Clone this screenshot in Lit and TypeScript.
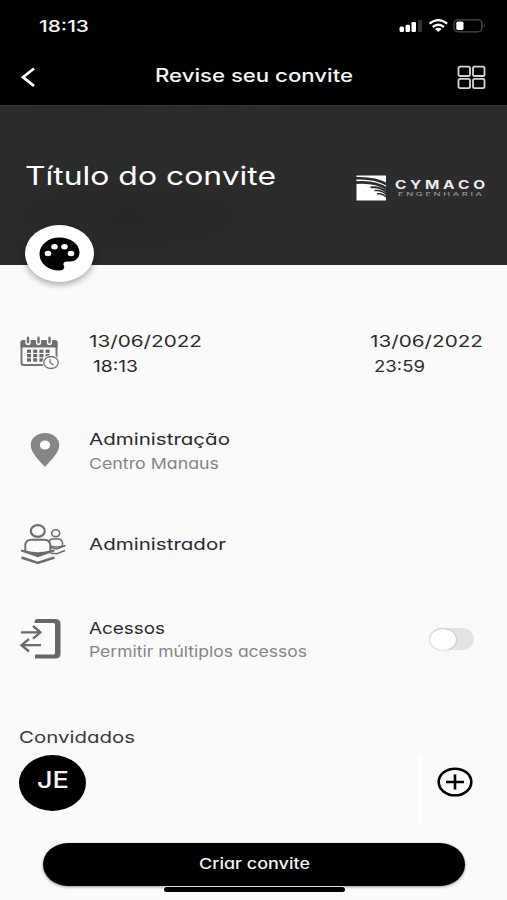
import { LitElement, html, svg, css } from "lit";
import { customElement, property } from "lit/decorators.js";

@customElement("wide-text")
class WideText extends LitElement {
  @property() text = "";
  @property({ type: Number }) width = 100;
  @property({ type: Number }) size = 16.5;
  @property({ type: Number }) line = 24;
  @property({ type: Number }) baseline = 18;
  static styles = css`
    :host { display: block; flex: none; }
    svg { display: block; overflow: visible; }
    text { fill: currentColor; font-family: Inter, "Liberation Sans", sans-serif; font-feature-settings: "cv11"; }
  `;
  render() {
    return html`<svg width=${this.width} height=${this.line}>
      ${svg`<text x="0" y=${this.baseline} font-size=${this.size} textLength=${this.width} lengthAdjust="spacingAndGlyphs">${this.text}</text>`}
    </svg>`;
  }
}

@customElement("app-root")
class AppRoot extends LitElement {
  static styles = css`
    :host { display: block; height: 900px; background: #fafafa; color: #2b2b2b; overflow: hidden; }
    * { box-sizing: border-box; }
    svg { display: block; flex: none; overflow: visible; }
    .status { height: 50px; background: #000; color: #f4f4f4; display: flex; justify-content: space-between; padding: 14px 20px 0 39px; font-weight: 550; }
    .nav { height: 55px; background: #000; color: #f6f6f6; display: flex; justify-content: space-between; padding: 13px 21px 0 20px; font-weight: 550; }
    .nav .title { margin-left: 88px; }
    .nav .grid { margin-left: 77px; }
    .hero { position: relative; height: 160px; color: #fff; display: flex; justify-content: space-between; padding: 54px 22px 0 25px;
      background: radial-gradient(ellipse at 18% 0, rgba(38,41,43,.6), transparent 40%), radial-gradient(ellipse at 25% 70%, rgba(37,37,37,.7), transparent 40%), #2c2c2c;
      border-top: 1px solid #353535; }
    .hero .title { font-weight: 400; }
    .logo { display: flex; gap: 8px; padding-top: 15px; }
    .brand { display: flex; flex-direction: column; padding-top: 3px; }
    .brand .name { font-weight: 650; color: #ececec; }
    .brand .sub { color: #a4a4a4; margin-left: 3px; }
    .palette { position: absolute; left: 25px; top: 119px; width: 69px; height: 57px; border-radius: 50%; background: #fff; display: flex; align-items: center; justify-content: center; box-shadow: 0 3px 6px rgba(0,0,0,.32); }
    .row { display: flex; align-items: center; padding: 0 24px 0 19px; }
    .row .icon { width: 70px; flex: none; }
    .grow { flex: 1; }
    .dates { margin-top: 64px; height: 50px; }
    .place { margin-top: 48px; height: 46px; }
    .admin { margin-top: 50px; height: 42px; }
    .access { margin-top: 51px; height: 46px; padding-right: 33px; }
    .time { padding-left: 4px; }
    .muted { color: #858585; }
    .switch { width: 44px; height: 22px; border-radius: 12px / 11px; background: #e3e3e3; display: flex; align-items: center; }
    .knob { width: 26px; height: 21px; border-radius: 50%; background: #fff; box-shadow: 0 0 2px rgba(0,0,0,.35); }
    .heading { padding: 63px 0 0 19px; color: #3a3a3a; }
    .guests { display: flex; padding: 4px 34px 0 19px; height: 75px; }
    .avatar { width: 67px; height: 56px; margin-top: 1px; border-radius: 50%; background: #000; color: #f5f5f5; display: flex; justify-content: center; padding-top: 10px; font-weight: 450; }
    .divider { width: 4px; height: 70px; background: #fff; margin-right: 15px; }
    .add { margin-top: 13px; }
    .cta { margin: 18px 42px 0 43px; height: 43px; border-radius: 25px / 21.5px; background: #000; color: #f4f4f4; display: flex; justify-content: center; padding: 2px 0 0 0; box-shadow: 0 1px 3px rgba(0,0,0,.4); font-weight: 550; }
    .home { width: 181px; height: 5px; margin: 1px 0 0 164px; border-radius: 3px; background: #000; box-shadow: 0 0 0 1px rgba(255,255,255,.55); position: relative; }
  `;

  private calendar() {
    const dots = [0, 1, 2, 3].flatMap((c) => [0, 1, 2].map((r) => svg`<rect x=${8 + c * 6.2} y=${12.6 + r * 4.4} width="4" height="3.3" fill="#686868"/>`));
    return html`<svg width="42" height="34" viewBox="0 0 42 34">
      <path d="M4.500 4H35Q37.500 4 37.500 6.500V26Q37.500 28 35 28H4.500Q2.500 28 2.500 26V6.500Q2.500 4 4.500 4Z" fill="#fafafa" stroke="#757575" stroke-width="2"/>
      <path d="M1.500 5Q1.500 3 4 3H36Q38.500 3 38.500 5V10.500H1.500Z" fill="#707070"/>
      <path d="M9 1V5.500M19.500 1V5.500M30.500 1V5.500" stroke="#fafafa" stroke-width="5.200" stroke-linecap="round"/>
      <path d="M9 .8V5.300M19.500 .8V5.300M30.500 .8V5.300" stroke="#707070" stroke-width="2.400" stroke-linecap="round"/>
      ${dots}
      <ellipse cx="32" cy="25.500" rx="8.800" ry="7.400" fill="#fafafa"/>
      <ellipse cx="32" cy="25.500" rx="7.200" ry="6" fill="#fafafa" stroke="#777" stroke-width="1.300"/>
      <path d="M31 22V25.500L34.500 28" fill="none" stroke="#777" stroke-width="1.300"/>
    </svg>`;
  }

  render() {
    return html`
      <div class="status">
        <wide-text text="18:13" width="50" size="16.5"></wide-text>
        <svg width="88" height="24" viewBox="0 0 88 24">
          <g fill="#fff"><rect x="0.500" y="12.500" width="4.500" height="5.500" rx="1.500"/><rect x="6.500" y="10.700" width="4.500" height="7.300" rx="1.200"/><rect x="12.500" y="8" width="4.500" height="10" rx="1.200"/></g>
          <rect x="19" y="6" width="4.300" height="12" rx="1.200" fill="#333"/>
          <g fill="none" stroke="#fff" stroke-width="2.300"><path d="M30.500 9.700Q39.300 2.500 48.200 9.700"/><path d="M33.700 13Q39.300 8.500 45 13"/></g>
          <path d="M36 15Q39.300 12.700 42.700 15L39.300 18Z" fill="#fff"/>
          <rect x="55" y="5.800" width="28" height="12" rx="4" fill="none" stroke="#4a4a4a" stroke-width="1.300"/>
          <rect x="57.300" y="7.500" width="7.200" height="8.600" rx="1.700" fill="#fff"/>
          <path d="M84.800 10Q87.200 11.700 84.800 13.500Z" fill="#4a4a4a"/>
        </svg>
      </div>
      <div class="nav">
        <svg width="20" height="28" viewBox="0 0 20 28"><path d="M14 5.500L3 14.200L14 23" fill="none" stroke="#fff" stroke-width="2.800"/></svg>
        <wide-text class="title" text="Revise seu convite" width="198" size="18" baseline="18.500"></wide-text>
        <svg class="grid" width="29" height="28" viewBox="0 0 29 28"><g fill="none" stroke="#d6d6d6" stroke-width="1.800"><rect x="1.500" y="3.700" width="11.500" height="9.300" rx="1.600"/><rect x="16" y="3.700" width="11.500" height="9.300" rx="1.600"/><rect x="1.500" y="15.900" width="11.500" height="9.300" rx="1.600"/><rect x="16" y="15.900" width="11.500" height="9.300" rx="1.600"/></g></svg>
      </div>
      <div class="hero">
        <wide-text class="title" text="Título do convite" width="251" size="25.500" line="32" baseline="25"></wide-text>
        <div class="logo">
          <svg width="31" height="26" viewBox="0 0 31 26"><path d="M.5 .5H30V25.500H.500Z" fill="#fff"/>
            <g fill="none" stroke="#2c2c2c"><path d="M0 3.300Q19 2.500 31 9.500" stroke-width="2.600"/><path d="M0 7.700Q19 6 31 14" stroke-width="2.800"/><path d="M14.500 12.300H19Q26 13 31 17.500" stroke-width="1.900"/><path d="M18.500 15.500H22Q27 16 31 20" stroke-width="1.700"/><path d="M21 18.800H24Q28 19.500 31 22.500" stroke-width="1.500"/></g></svg>
          <div class="brand">
            <wide-text class="name" text="C Y M A C O" width="90" size="11.800" line="14" baseline="10.800"></wide-text>
            <wide-text class="sub" text="E N G E N H A R I A" width="84" size="4.600" line="8" baseline="4.200"></wide-text>
          </div>
        </div>
        <div class="palette">
          <svg width="41" height="34" viewBox="0 0 41 34"><path d="M20.500.5C9 .5.500 8 .500 17C.500 26 9 33.500 20.500 33.500C24 33.500 26 31.500 25 29C23.500 26.500 25 24.500 28 24.500H31C37 24.500 40.500 20.500 40.500 15.500C40.500 7 31.500.500 20.500.500Z" fill="#000"/>
            <g fill="#fff"><ellipse cx="9" cy="16.500" rx="3.300" ry="2.700"/><ellipse cx="15.500" cy="9.700" rx="3.300" ry="2.700"/><ellipse cx="25.500" cy="9.700" rx="3.300" ry="2.700"/><ellipse cx="32" cy="16.500" rx="3.300" ry="2.700"/></g></svg>
        </div>
      </div>

      <div class="row dates">
        <div class="icon">${this.calendar()}</div>
        <div class="grow">
          <wide-text text="13/06/2022" width="113" line="25"></wide-text>
          <wide-text class="time" text="18:13" width="45" line="25"></wide-text>
        </div>
        <div>
          <wide-text text="13/06/2022" width="113" line="25"></wide-text>
          <wide-text class="time" text="23:59" width="51" line="25"></wide-text>
        </div>
      </div>

      <div class="row place">
        <div class="icon"><svg width="52" height="36" viewBox="0 0 52 36"><path fill-rule="evenodd" fill="#868686" d="M26 1C18 1 11.700 6 11.700 13C11.700 20 18 26 26 35C34 26 40.300 20 40.300 13C40.300 6 34 1 26 1ZM26 8.500A5.200 4.500 0 1 1 26 17.500A5.200 4.500 0 1 1 26 8.500Z"/></svg></div>
        <div>
          <wide-text text="Administração" width="141" line="23"></wide-text>
          <wide-text class="muted" text="Centro Manaus" width="130" size="15" line="23" baseline="18.500"></wide-text>
        </div>
      </div>

      <div class="row admin">
        <div class="icon"><svg width="48" height="42" viewBox="0 0 48 42"><g fill="none" stroke="#6c6c6c">
          <ellipse cx="36.700" cy="10.200" rx="4" ry="3.400" stroke-width="1.600"/>
          <path d="M29.500 23V20.500Q29.500 16 34.500 16H38.500Q43.500 16 43.500 20.500V23Q38 25 31 23" stroke-width="1.500"/>
          <path d="M31 24.500L37.500 26L46.500 22.500M31.500 30.300L38 30.800L46 27.500" stroke-width="1.600"/>
          <ellipse cx="18.800" cy="8" rx="7" ry="5.900" stroke-width="2.200"/>
          <path d="M6.300 29V22Q6.300 16.500 12.500 16.500H25Q31.300 16.500 31.300 22V29Z" fill="#fafafa" stroke="none"/>
          <path d="M6.300 29V22.500Q6.300 16.800 12.500 16.800H25Q31.300 16.800 31.300 22.500V29" stroke-width="1.900"/>
          <path d="M2.500 34.500L18.800 40L35.500 34.500" stroke-width="2.500"/></g>
          <path d="M2 26.500L6.500 27.500Q18.800 31 31 27.500L35.500 26.500V28.500L18.800 34.300L2 28.500Z" fill="#6c6c6c"/></svg></div>
        <wide-text text="Administrador" width="137"></wide-text>
      </div>

      <div class="row access">
        <div class="icon"><svg width="42" height="42" viewBox="0 0 42 42"><path d="M18 1H36Q41.500 1 41.500 5.500V36Q41.500 40.500 36 40.500H16V36.500H34.500Q36 36.500 36 35V6.500Q36 5 34.500 5H15.500Q15.500 1 18 1Z" fill="#666"/>
          <path d="M2 14.300H21M14 8L21.500 14.300L14 20.700M22 27.200H3M10 21L2.500 27.200L10 33.500" fill="none" stroke="#6a6a6a" stroke-width="2.300"/></svg></div>
        <div class="grow">
          <wide-text text="Acessos" width="76" line="23"></wide-text>
          <wide-text class="muted" text="Permitir múltiplos acessos" width="218" size="15" line="23"></wide-text>
        </div>
        <div class="switch"><div class="knob"></div></div>
      </div>

      <div class="heading"><wide-text text="Convidados" width="116" line="25"></wide-text></div>
      <div class="guests">
        <div class="avatar"><wide-text text="JE" width="32" size="22.500" baseline="23"></wide-text></div>
        <div class="grow"></div>
        <div class="divider"></div>
        <svg class="add" width="36" height="30" viewBox="0 0 36 30"><ellipse cx="18" cy="15" rx="16.300" ry="13.300" fill="none" stroke="#000" stroke-width="2.600"/><path d="M9 15H27M18 7.500V22.500" stroke="#000" stroke-width="2.600"/></svg>
      </div>
      <div class="cta"><wide-text text="Criar convite" width="111" size="14.800" baseline="23.500"></wide-text></div>
      <div class="home"></div>
    `;
  }
}
